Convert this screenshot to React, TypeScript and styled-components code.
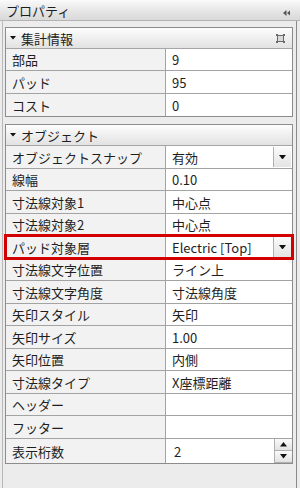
import * as React from 'react'
import styled, { createGlobalStyle } from 'styled-components'

const GlobalStyle = createGlobalStyle`
  *, *::before, *::after {
    box-sizing: border-box;
  }
  html, body {
    margin: 0;
    padding: 0;
    background: #ededed;
  }
  body {
    font-family: "Noto Sans CJK JP", "Noto Sans", sans-serif;
    font-size: 13px;
    color: #1e1e1e;
  }
`

const Window = styled.div`
  width: 300px;
  height: 488px;
  display: flex;
  flex-direction: column;
  background: #ececec;
  overflow: hidden;
`

const TitleBar = styled.div`
  height: 21px;
  flex: none;
  display: flex;
  align-items: center;
  justify-content: space-between;
  padding: 0 10px 0 6px;
  background: linear-gradient(#fafafa, #e6e6e6 55%, #d9d9d9);
  border-bottom: 1px solid #b4b4b4;
  line-height: 1;
`

const Body = styled.div`
  flex: 1;
  margin: 0 3px 0 2px;
  padding: 6px 3px 0 2px;
  border-left: 1px solid #b8b8b8;
  border-right: 1px solid #8a8a8a;
  display: flex;
  flex-direction: column;
  gap: 7px;
`

const Panel = styled.section`
  border: 1px solid #8c8c8c;
  background: #fff;
`

const PanelHeader = styled.div`
  height: 21px;
  display: flex;
  align-items: center;
  gap: 5px;
  padding: 0 7px 0 4px;
  background: linear-gradient(#fdfdfd, #efefef 50%, #e2e2e2);
  border-bottom: 1px solid #a6a6a6;
  line-height: 1;
`

const HeaderTitle = styled.span`
  flex: 1;
`

const Grid = styled.div`
  display: grid;
  grid-template-columns: 160px 1fr;
`

const Row = styled.div`
  display: contents;
`

const LabelCell = styled.div<{ $h: number; $last?: boolean }>`
  height: ${p => p.$h}px;
  display: flex;
  align-items: center;
  padding-left: 6px;
  background: #f2f2f2;
  border-right: 1px solid #a3a3a3;
  border-bottom: ${p => (p.$last ? 'none' : '1px solid #a3a3a3')};
  white-space: nowrap;
  line-height: 1;
`

const ValueCell = styled.div<{ $h: number; $last?: boolean }>`
  height: ${p => p.$h}px;
  display: flex;
  align-items: center;
  padding-left: 6px;
  background: #fff;
  border-bottom: ${p => (p.$last ? 'none' : '1px solid #a3a3a3')};
  white-space: nowrap;
  line-height: 1;
`

const Highlight = styled.div`
  position: relative;
  grid-column: 1 / -1;
  display: grid;
  grid-template-columns: 160px 1fr;
  &::after {
    content: '';
    position: absolute;
    left: -2px;
    right: -2px;
    top: -2px;
    bottom: -1px;
    border: 3px solid #d20000;
    pointer-events: none;
  }
`

const ValueText = styled.span<{ $pad?: number }>`
  flex: 1;
  padding-left: ${p => p.$pad ?? 0}px;
`

const DropButton = styled.div`
  align-self: stretch;
  width: 18px;
  margin: 1px 1px 1px 0;
  display: flex;
  align-items: center;
  justify-content: center;
  border-left: 1px solid #b0b0b0;
  background: linear-gradient(#fafafa, #e4e4e4);
`

const Spinner = styled.div`
  align-self: stretch;
  width: 18px;
  display: grid;
  grid-template-rows: 1fr 1fr;
  border-left: 1px solid #b0b0b0;
`

const SpinPart = styled.div`
  display: flex;
  align-items: center;
  justify-content: center;
  background: linear-gradient(#fafafa, #e2e2e2);
  border-bottom: 1px solid #b0b0b0;
`

const Tri = ({ dir = 'down', w = 7 }: { dir?: 'down' | 'up' | 'left'; w?: number }) => {
  const h = Math.ceil(w / 2) + 0.5
  if (dir === 'left')
    return (
      <svg width={h} height={w} viewBox={`0 0 ${h} ${w}`}>
        <polygon points={`${h},0 ${h},${w} 0,${w / 2}`} fill="#555" />
      </svg>
    )
  return (
    <svg width={w} height={h} viewBox={`0 0 ${w} ${h}`}>
      <polygon
        points={dir === 'down' ? `0,0 ${w},0 ${w / 2},${h}` : `0,${h} ${w},${h} ${w / 2},0`}
        fill="#111"
      />
    </svg>
  )
}

const PinIcon = () => (
  <svg width="9" height="9" viewBox="0 0 9 9">
    <rect x="1.5" y="1.5" width="6" height="6" fill="#d8d8d8" stroke="#6a6a6a" />
    <rect x="0" y="0" width="2" height="2" fill="#6a6a6a" />
    <rect x="7" y="0" width="2" height="2" fill="#6a6a6a" />
    <rect x="0" y="7" width="2" height="2" fill="#6a6a6a" />
    <rect x="7" y="7" width="2" height="2" fill="#6a6a6a" />
  </svg>
)

type Item = {
  label: string
  value?: string
  kind?: 'drop' | 'spin'
  marked?: boolean
}

const summary: Item[] = [
  { label: '部品', value: '9' },
  { label: 'パッド', value: '95' },
  { label: 'コスト', value: '0' },
]

const objects: Item[] = [
  { label: 'オブジェクトスナップ', value: '有効', kind: 'drop' },
  { label: '線幅', value: '0.10' },
  { label: '寸法線対象1', value: '中心点' },
  { label: '寸法線対象2', value: '中心点' },
  { label: 'パッド対象層', value: 'Electric [Top]', kind: 'drop', marked: true },
  { label: '寸法線文字位置', value: 'ライン上' },
  { label: '寸法線文字角度', value: '寸法線角度' },
  { label: '矢印スタイル', value: '矢印' },
  { label: '矢印サイズ', value: '1.00' },
  { label: '矢印位置', value: '内側' },
  { label: '寸法線タイプ', value: 'X座標距離' },
  { label: 'ヘッダー', value: '' },
  { label: 'フッター', value: '' },
  { label: '表示桁数', value: '2', kind: 'spin' },
]

const PropRow = ({ item, last, h }: { item: Item; last: boolean; h: number }) => {
  const cells = (
    <>
      <LabelCell $h={h} $last={last}>
        {item.label}
      </LabelCell>
      <ValueCell $h={h} $last={last}>
        <ValueText $pad={item.kind === 'spin' ? 2 : 0}>{item.value}</ValueText>
        {item.kind === 'drop' && (
          <DropButton>
            <Tri />
          </DropButton>
        )}
        {item.kind === 'spin' && (
          <Spinner>
            <SpinPart>
              <Tri dir="up" w={7} />
            </SpinPart>
            <SpinPart>
              <Tri dir="down" w={7} />
            </SpinPart>
          </Spinner>
        )}
      </ValueCell>
    </>
  )
  return item.marked ? <Highlight>{cells}</Highlight> : <Row>{cells}</Row>
}

// spread a total height over n rows, the last row taking any spare pixels
const rowHeights = (n: number, total: number, lastExtra = 0) =>
  Array.from(
    { length: n },
    (_, i) =>
      Math.round(((i + 1) * (total - lastExtra)) / n) -
      Math.round((i * (total - lastExtra)) / n) +
      (i === n - 1 ? lastExtra : 0)
  )

const PropPanel = ({
  title,
  items,
  pin,
  total,
  lastExtra,
}: {
  title: string
  items: Item[]
  pin?: boolean
  total: number
  lastExtra?: number
}) => {
  const hs = rowHeights(items.length, total, lastExtra)
  return (
    <Panel>
      <PanelHeader>
        <Tri w={6} />
        <HeaderTitle>{title}</HeaderTitle>
        {pin && <PinIcon />}
      </PanelHeader>
      <Grid>
        {items.map((it, i) => (
          <PropRow key={it.label} item={it} last={i === items.length - 1} h={hs[i]} />
        ))}
      </Grid>
    </Panel>
  )
}

const App: React.FC = () => (
  <Window>
    <GlobalStyle />
    <TitleBar>
      <span>プロパティ</span>
      <span>
        <Tri dir="left" w={6} />
        <Tri dir="left" w={6} />
      </span>
    </TitleBar>
    <Body>
      <PropPanel title="集計情報" items={summary} pin total={67} />
      <PropPanel title="オブジェクト" items={objects} total={317} lastExtra={2} />
    </Body>
  </Window>
)

export default App
